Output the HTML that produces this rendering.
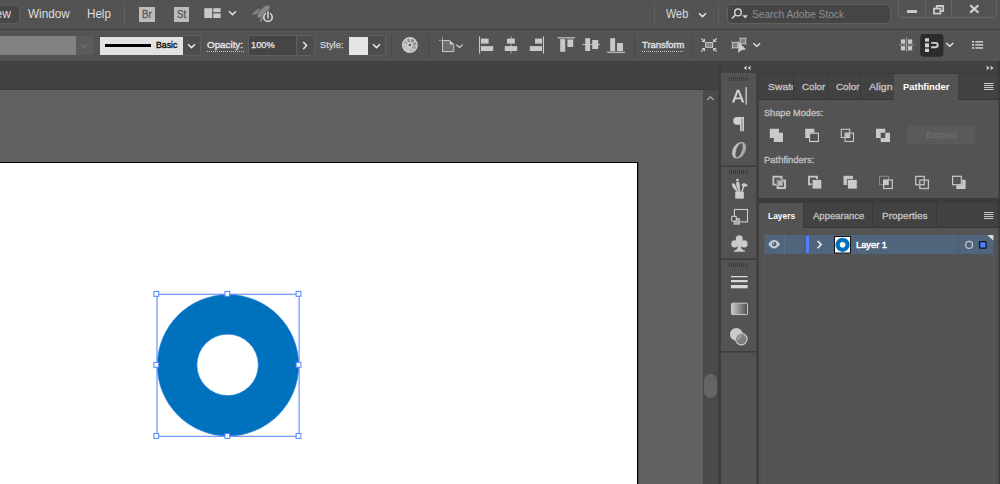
<!DOCTYPE html>
<html>
<head>
<meta charset="utf-8">
<title>Illustrator</title>
<style>
*{margin:0;padding:0;box-sizing:border-box;}
html,body{width:1000px;height:484px;overflow:hidden;background:#535353;}
body{position:relative;font-family:"Liberation Sans",sans-serif;color:#dcdcdc;font-size:12px;}
.a{position:absolute;}
.t{position:absolute;white-space:nowrap;line-height:1;transform-origin:0 0;}
svg{position:absolute;overflow:visible;}
/* ---- bars ---- */
#menubar{left:0;top:0;width:1000px;height:29px;background:#535353;}
#menuline{left:0;top:29px;width:1000px;height:1px;background:#3e3e3e;}
#ctrlbar{left:0;top:30px;width:1000px;height:31px;background:#535353;}
#tabbar{left:0;top:61px;width:719px;height:28px;background:#424242;}
#tabline{left:0;top:89px;width:719px;height:1px;background:#3a3a3a;}
#canvas{left:0;top:90px;width:703px;height:394px;background:#616161;}
#artboard{left:-2px;top:162px;width:640px;height:330px;background:#fff;border:1px solid #000;box-shadow:1px 0 0 rgba(0,0,0,.28);}
#vscroll{left:703px;top:90px;width:15px;height:394px;background:#4a4a4a;}
#vthumb{left:704px;top:374px;width:13px;height:24px;background:#656565;border-radius:7px;}
/* dock */
#dockhdr{left:719px;top:61px;width:281px;height:12px;background:#424242;}
#dockl{left:718px;top:61px;width:3px;height:423px;background:#3d3d3d;}
#iconcol{left:721px;top:73px;width:35px;height:411px;background:#535353;}
#dockm{left:756px;top:73px;width:3px;height:411px;background:#3f3f3f;}
.sep{left:721px;width:35px;height:2px;background:#3d3d3d;}
/* panels */
#pf-tabs{left:759px;top:73px;width:241px;height:27px;background:#424242;border-bottom:1px solid #383838;}
#pf-body{left:759px;top:100px;width:241px;height:98px;background:#535353;}
#pgap{left:759px;top:198px;width:241px;height:5px;background:#3b3b3b;}
#ly-tabs{left:759px;top:203px;width:241px;height:25px;background:#424242;border-bottom:1px solid #383838;}
#ly-body{left:759px;top:228px;width:241px;height:256px;background:#535353;}
.tabsep{width:1px;height:26px;background:#3a3a3a;}
.tabact{background:#535353;height:28px;}
.tb{font-size:9.2px;color:#c2c2c2;-webkit-text-stroke:0.3px #c2c2c2;}
</style>
</head>
<body>
<!-- background structure -->
<div class="a" id="menubar"></div>
<div class="a" id="menuline"></div>
<div class="a" id="ctrlbar"></div>
<div class="a" id="tabbar"></div>
<div class="a" id="tabline"></div>
<div class="a" id="canvas"></div>
<div class="a" id="artboard"></div>
<div class="a" id="vscroll"></div>
<div class="a" id="vthumb"></div>
<div class="a" id="dockhdr"></div>
<div class="a" id="iconcol"></div>
<div class="a" id="dockl"></div>
<div class="a" id="dockm"></div>
<div class="a" id="pf-tabs"></div>
<div class="a" id="pf-body"></div>
<div class="a" id="pgap"></div>
<div class="a" id="ly-tabs"></div>
<div class="a" id="ly-body"></div>
<div class="a" style="left:759px;top:73px;width:241px;height:1px;background:#393939;"></div>
<div class="a" style="left:999px;top:61px;width:1px;height:423px;background:#393939;z-index:5;"></div>
<div class="a" style="left:998px;top:61px;width:1px;height:423px;background:rgba(0,0,0,.13);z-index:5;"></div>
<!--MENUBAR-->
<div class="a" style="left:-6px;top:5px;width:26px;height:19px;background:#474747;border:1px solid #5c5c5c;border-radius:3px;"></div>
<div class="t" id="t-ew" style="left:-14.900px;top:8.20px;font-size:12px;color:#dedede;">View</div>
<div class="t" id="t-window" style="transform:scaleX(0.977);left:28.0px;top:8.20px;font-size:12px;color:#dedede;">Window</div>
<div class="t" id="t-help" style="transform:scaleX(0.968);left:86.9px;top:8.20px;font-size:12px;color:#dedede;">Help</div>
<div class="a" style="left:124px;top:5px;width:1px;height:19px;background:#616161;"></div>
<!-- Br / St -->
<div class="a" style="left:139px;top:7px;width:15.500px;height:15px;background:#bcbcbc;"></div>
<div class="t" id="t-br" style="left:141.800px;top:9.100px;font-size:10.500px;color:#575757;-webkit-text-stroke:0.300px #575757;transform:scaleX(.92);">Br</div>
<div class="a" style="left:174px;top:7px;width:15px;height:15px;background:#bcbcbc;"></div>
<div class="t" id="t-st" style="left:176.600px;top:9.100px;font-size:10.500px;color:#575757;-webkit-text-stroke:0.300px #575757;transform:scaleX(.92);">St</div>
<!-- workspace layout icon -->
<svg style="left:204px;top:8px" width="18" height="11" viewBox="0 0 18 11"><g fill="#c9c9c9"><rect x="0.300" y="0.200" width="7.900" height="9.800"/><rect x="9.300" y="0.200" width="7.300" height="3.900"/><rect x="9.300" y="5.400" width="7.300" height="4.600"/></g></svg>
<svg style="left:228.200px;top:10px" width="9" height="6" viewBox="0 0 9 6"><path d="M1 1.2L4.5 4.6L8 1.2" fill="none" stroke="#e0e0e0" stroke-width="1.5"/></svg>
<!-- rocket / gpu icon -->
<svg style="left:245px;top:0px" width="40" height="29" viewBox="245 0 40 29">
  <g fill="#858585">
    <ellipse cx="263.5" cy="11.5" rx="8.2" ry="3.2" transform="rotate(-45 263.5 11.5)"/>
    <path d="M252.2 14.1L258.3 8.5L259.9 9.1L256.8 13.9L252.6 14.8z"/>
    <path d="M259.7 21.8L261 17.8L262.7 16.4L263.1 18.8L260.9 21.9z"/>
  </g>
  <circle cx="268" cy="17.2" r="5.4" fill="#535353"/>
  <circle cx="268" cy="17.2" r="4.2" fill="none" stroke="#d6d6d6" stroke-width="1.7"/>
  <rect x="266" y="10.8" width="3.8" height="5" fill="#535353"/>
  <rect x="267.1" y="11.4" width="1.6" height="7" fill="#d6d6d6"/>
</svg>
<!-- right side -->
<div class="a" style="left:654px;top:5px;width:1px;height:19px;background:#616161;"></div>
<div class="t" id="t-web" style="transform:scaleX(0.907);left:666.4px;top:7.5px;font-size:12px;color:#dedede;">Web</div>
<svg style="left:698px;top:12px" width="9" height="6" viewBox="0 0 9 6"><path d="M1 1.2L4.5 4.6L8 1.2" fill="none" stroke="#e0e0e0" stroke-width="1.5"/></svg>
<div class="a" style="left:718px;top:5px;width:1px;height:19px;background:#616161;"></div>
<div class="a" style="left:727px;top:4px;width:164px;height:20px;background:#454545;border:1px solid #606060;border-radius:4px;"></div>
<svg style="left:731px;top:7px" width="18" height="14" viewBox="0 0 18 14">
  <circle cx="7" cy="5.400" r="3.300" fill="none" stroke="#d0d0d0" stroke-width="1.500"/>
  <path d="M4.700 7.800L0.800 11.500" stroke="#d0d0d0" stroke-width="1.600" fill="none"/>
  <path d="M11.200 8.300h5.700l-2.850 3.100z" fill="#d0d0d0"/>
</svg>
<div class="t" id="t-search" style="transform:scaleX(0.923);left:752.0px;top:8.5px;font-size:11px;color:#8f8f8f;">Search Adobe Stock</div>
<!-- window buttons -->
<div class="a" style="left:898px;top:-4px;width:99px;height:22px;border:1px solid #656565;border-radius:4px;"></div>
<div class="a" style="left:925px;top:0;width:1px;height:17px;background:#656565;"></div>
<div class="a" style="left:951px;top:0;width:1px;height:17px;background:#656565;"></div>
<div class="a" style="left:907px;top:10.200px;width:9.700px;height:3.200px;background:#c9c9c9;"></div>
<svg style="left:933px;top:5px" width="12" height="10" viewBox="0 0 12 10"><g fill="none" stroke="#c9c9c9" stroke-width="1.800"><path d="M3.700 3.200V1H10.200V6H8"/><rect x="1" y="3.600" width="6.400" height="5"/></g></svg>
<svg style="left:969px;top:4px" width="11" height="10" viewBox="0 0 11 10"><path d="M1.200 1.200L9.400 8.600M9.400 1.200L1.200 8.600" stroke="#cdcdcd" stroke-width="2.200" fill="none"/></svg>
<!--CTRLBAR-->
<div class="a" style="left:-4px;top:36px;width:80px;height:19px;background:#828282;"></div>
<div class="a" style="left:76px;top:36px;width:18px;height:19px;background:#5b5b5b;border-radius:0 3px 3px 0;"></div>
<svg style="left:80px;top:43px" width="9" height="6" viewBox="0 0 9 6"><path d="M1 1.2L4.5 4.6L8 1.2" fill="none" stroke="#6e6e6e" stroke-width="1.4"/></svg>
<!-- stroke -->
<div class="a" style="left:99.5px;top:36.6px;width:83px;height:18px;background:#e2e2e2;"></div>
<div class="a" style="left:105px;top:44.4px;width:46.4px;height:2.5px;background:#000;"></div>
<div class="t" id="t-basic" style="transform:scaleX(0.933);left:155.9px;top:40.1px;font-size:9.4px;color:#000;-webkit-text-stroke:0.3px #000;">Basic</div>
<div class="a" style="left:183px;top:35px;width:18px;height:21px;background:#4d4d4d;border:1px solid #5e5e5e;border-left:none;border-radius:0 3px 3px 0;"></div>
<svg style="left:187px;top:43px" width="9" height="6" viewBox="0 0 9 6"><path d="M1 1.2L4.5 4.6L8 1.2" fill="none" stroke="#e6e6e6" stroke-width="1.5"/></svg>
<!-- opacity -->
<div class="t" id="t-opacity" style="transform:scaleX(1.047);left:207.0px;top:40.1px;font-size:9.4px;color:#e4e4e4;-webkit-text-stroke:0.35px #e4e4e4;">Opacity:</div>
<div class="a" style="left:207px;top:51px;width:37px;height:1px;background:repeating-linear-gradient(90deg,#c4c4c4 0 1px,transparent 1px 2px);"></div>
<div class="a" style="left:248px;top:35px;width:67px;height:21px;background:#454545;border:1px solid #5e5e5e;border-radius:3px;"></div>
<div class="a" style="left:296px;top:36px;width:1px;height:19px;background:#5e5e5e;"></div>
<div class="a" style="left:297px;top:36px;width:17px;height:19px;background:#4d4d4d;border-radius:0 2px 2px 0;"></div>
<div class="t" id="t-100" style="transform:scaleX(0.992);left:251.2px;top:40.1px;font-size:9.4px;color:#ececec;-webkit-text-stroke:0.25px #ececec;">100%</div>
<svg style="left:302px;top:41px" width="6" height="9" viewBox="0 0 6 9"><path d="M1.2 1L4.6 4.5L1.2 8" fill="none" stroke="#e6e6e6" stroke-width="1.5"/></svg>
<!-- style -->
<div class="t" id="t-style" style="transform:scaleX(1.002);left:319.5px;top:40.1px;font-size:9.4px;color:#d4d4d4;-webkit-text-stroke:0.25px #d4d4d4;">Style:</div>
<div class="a" style="left:349.200px;top:36.500px;width:18.600px;height:18.300px;background:#e5e5e5;"></div>
<div class="a" style="left:368px;top:35px;width:18px;height:21px;background:#4d4d4d;border:1px solid #5e5e5e;border-left:none;border-radius:0 3px 3px 0;"></div>
<svg style="left:372px;top:43px" width="9" height="6" viewBox="0 0 9 6"><path d="M1 1.2L4.5 4.6L8 1.2" fill="none" stroke="#e6e6e6" stroke-width="1.5"/></svg>
<div class="a" style="left:391px;top:34px;width:1px;height:23px;background:#484848;"></div>
<!-- recolor wheel -->
<svg style="left:395px;top:32px" width="75" height="28" viewBox="395 32 75 28">
  <circle cx="409.85" cy="45.10" r="8" fill="#d0d0d0"/>
  <path d="M410.60 42.30L411.58 38.63A6.7 6.7 0 0 1 414.67 40.45L411.94 43.09A2.9 2.9 0 0 0 410.60 42.30z" fill="#868686"/>
  <path d="M412.36 43.65L415.65 41.75A6.7 6.7 0 0 1 416.55 45.22L412.75 45.15A2.9 2.9 0 0 0 412.36 43.65z" fill="#8e8e8e"/>
  <path d="M412.65 45.85L416.32 46.83A6.7 6.7 0 0 1 414.50 49.92L411.86 47.19A2.9 2.9 0 0 0 412.65 45.85z" fill="#9c9c9c"/>
  <path d="M411.30 47.61L413.20 50.90A6.7 6.7 0 0 1 409.73 51.80L409.80 48.00A2.9 2.9 0 0 0 411.30 47.61z" fill="#b2b2b2"/>
  <path d="M409.10 47.90L408.12 51.57A6.7 6.7 0 0 1 405.03 49.75L407.76 47.11A2.9 2.9 0 0 0 409.10 47.90z" fill="#c2c2c2"/>
  <path d="M407.34 46.55L404.05 48.45A6.7 6.7 0 0 1 403.15 44.98L406.95 45.05A2.9 2.9 0 0 0 407.34 46.55z" fill="#bcbcbc"/>
  <path d="M407.05 44.35L403.38 43.37A6.7 6.7 0 0 1 405.20 40.28L407.84 43.01A2.9 2.9 0 0 0 407.05 44.35z" fill="#a6a6a6"/>
  <path d="M408.40 42.59L406.50 39.30A6.7 6.7 0 0 1 409.97 38.40L409.90 42.20A2.9 2.9 0 0 0 408.40 42.59z" fill="#909090"/>
  <circle cx="409.85" cy="45.10" r="1.1" fill="#3c3c3c"/>
</svg>
<div class="a" style="left:428px;top:34px;width:1px;height:23px;background:#474747;"></div>
<!-- doc setup icon -->
<svg style="left:435px;top:32px" width="35" height="28" viewBox="435 32 35 28">
  <path d="M442.500 37v3.600M439.200 40.500h3.800" stroke="#bdbdbd" stroke-width="0.9" fill="none" stroke-dasharray="1.2 0.9"/>
  <path d="M442.500 40.600h7.300l4 4v7h-11.300z" fill="#6e6e6e" stroke="#cbcbcb" stroke-width="1"/>
  <path d="M449.800 40.400v4.200h4.200z" fill="#d2d2d2"/>
  <path d="M456.300 44.600L459.500 47.500L462.700 44.600" fill="none" stroke="#d8d8d8" stroke-width="1.2"/>
</svg>
<!-- align icons -->
<svg style="left:470px;top:30px" width="170" height="31" viewBox="470 30 170 31"><g fill="#c8c8c8">
  <rect x="479" y="36.400" width="1.100" height="17.200"/><rect x="481" y="38.600" width="7.600" height="5"/><rect x="481" y="46.100" width="12.200" height="4.900"/>
  <rect x="510.450" y="36.400" width="1.100" height="17.200" fill="#a2a2a2"/><rect x="507" y="38.600" width="7.900" height="5"/><rect x="504.800" y="46.100" width="12.400" height="4.900"/>
  <rect x="542.900" y="36.400" width="1.100" height="17.200"/><rect x="535" y="38.600" width="7" height="5"/><rect x="529.800" y="46.100" width="12.200" height="4.900"/>
  <rect x="557.600" y="37.100" width="17.400" height="1.400" fill="#b4b4b4"/><rect x="560.200" y="39.100" width="5" height="12.700"/><rect x="567.400" y="39.500" width="5.800" height="7.500"/>
  <rect x="582.400" y="43.900" width="17.600" height="1.200" fill="#b4b4b4"/><rect x="585.200" y="38.200" width="4.900" height="12.800"/><rect x="592.200" y="40" width="6" height="9"/>
  <rect x="607.200" y="51.700" width="17.800" height="1.400" fill="#b4b4b4"/><rect x="610.200" y="38.200" width="4.900" height="13"/><rect x="617" y="43" width="6" height="8.200"/>
</g></svg>
<div class="a" style="left:634px;top:34px;width:1px;height:23px;background:#484848;"></div>
<div class="t" id="t-transform" style="transform:scaleX(1.001);left:642.0px;top:40.1px;font-size:9.4px;color:#e4e4e4;-webkit-text-stroke:0.35px #e4e4e4;">Transform</div>
<div class="a" style="left:642px;top:51px;width:42px;height:1px;background:repeating-linear-gradient(90deg,#c4c4c4 0 1px,transparent 1px 2px);"></div>
<div class="a" style="left:691px;top:34px;width:1px;height:23px;background:#484848;"></div>
<!-- isolate icon -->
<svg style="left:695px;top:32px" width="75" height="28" viewBox="695 32 75 28">
  <rect x="705.600" y="42.600" width="7" height="4.700" fill="#858585" stroke="#cdcdcd" stroke-width="1"/>
  <g fill="none" stroke="#cdcdcd" stroke-width="1.150">
    <path d="M701.300 38.300L704.400 41.400M701.900 41.500H704.500V38.900"/>
    <path d="M716.900 38.300L713.800 41.400M716.300 41.500H713.700V38.900"/>
    <path d="M701.300 51.700L704.400 48.600M701.900 48.500H704.500V51.100"/>
    <path d="M716.900 51.700L713.800 48.600M716.300 48.500H713.700V51.100"/>
  </g>
<!-- select similar icon -->
  <g fill="#7e7e7e" stroke="#c2c2c2" stroke-width="1">
    <rect x="740.300" y="38.300" width="5.400" height="5.400"/><rect x="732.400" y="42.400" width="5.400" height="5.400"/>
  </g>
  <g stroke="#b4b4b4" stroke-width="0.900" fill="none">
    <path d="M739.300 37.300l1 1M746.700 37.300l-1 1M746.700 44.700l-1 -1M739.300 44.700l1 -1"/>
    <path d="M731.400 41.400l1 1M731.400 48.800l1 -1M738.800 41.400l-1 1"/>
  </g>
  <path d="M738.200 41.200V53L741.300 50.300L746 49.400z" fill="#cbcbcb"/>
  <path d="M753.300 43.200L756.700 46.300L760.100 43.200" fill="none" stroke="#e2e2e2" stroke-width="1.400"/>
</svg>
<!-- right icons -->
<svg style="left:895px;top:32px" width="105" height="28" viewBox="895 32 105 28">
  <g fill="#c9c9c9"><rect x="900.900" y="39.400" width="4.300" height="4.300"/><rect x="907.900" y="39.400" width="4.300" height="4.300"/><rect x="900.900" y="46.100" width="4.300" height="4.300"/><rect x="907.900" y="46.100" width="4.300" height="4.300"/></g>
  <path d="M906.550 37.200v14.800M899 44.900h15" stroke="#9a9a9a" stroke-width="0.900" fill="none"/>
  <rect x="920.200" y="33.900" width="23.200" height="22.800" rx="3" fill="#2c2c2c"/>
  <g fill="#d2d2d2"><rect x="925" y="38.300" width="4" height="3.300"/><rect x="925" y="43.300" width="4" height="4"/><rect x="925" y="48.700" width="4" height="3.300"/></g>
  <path d="M931.200 42.900h4.300a2.200 2.200 0 0 1 0 4.400h-4.300" fill="none" stroke="#d2d2d2" stroke-width="1.900"/>
  <path d="M946.300 43L949.750 46.200L953.200 43" fill="none" stroke="#e6e6e6" stroke-width="1.500"/>
  <g fill="#cfcfcf"><rect x="972" y="41" width="2.100" height="1.700"/><rect x="972" y="44" width="2.100" height="1.700"/><rect x="972" y="47.100" width="2.100" height="1.700"/>
  <rect x="975.300" y="41.100" width="7.800" height="1.500"/><rect x="975.300" y="44.100" width="7.800" height="1.500"/><rect x="975.300" y="47.200" width="7.800" height="1.500"/></g>
</svg>
<!--CANVAS-->
<svg id="ring" style="left:0;top:90px" width="703" height="394" viewBox="0 90 703 394">
  <path fill="#0071bd" stroke="#2f7fe0" stroke-width="0.600" fill-rule="evenodd" d="M228 294.600a70.700 70.700 0 1 0 0 141.400a70.700 70.700 0 1 0 0-141.400zM227.600 334.200a30.700 30.700 0 1 1 0 61.400a30.700 30.700 0 1 1 0-61.400z"/>
  <rect x="157" y="294.250" width="142.100" height="142.050" fill="none" stroke="#4f80ff" stroke-width="1"/>
  <g fill="#fff" stroke="#4f80ff" stroke-width="1">
    <rect x="153.90" y="291.40" width="4.800" height="4.900"/>
    <rect x="224.90" y="291.40" width="4.800" height="4.900"/>
    <rect x="296.10" y="291.40" width="4.800" height="4.900"/>
    <rect x="153.90" y="362.35" width="4.800" height="4.900"/>
    <rect x="296.10" y="362.35" width="4.800" height="4.900"/>
    <rect x="153.90" y="433.45" width="4.800" height="4.900"/>
    <rect x="224.90" y="433.45" width="4.800" height="4.900"/>
    <rect x="296.10" y="433.45" width="4.800" height="4.900"/>
  </g>
</svg>
<!-- scrollbar arrow -->
<svg style="left:706px;top:95px" width="10" height="7" viewBox="0 0 10 7"><path d="M1.200 5L4.450 1.800L7.700 5" fill="none" stroke="#9c9c9c" stroke-width="1.600"/></svg>
<!--DOCK-->
<svg style="left:719px;top:61px" width="281" height="423" viewBox="719 61 281 423">
  <!-- collapse arrows -->
  <g fill="#dadada">
    <path d="M747.100 65.500L743.600 67.900L747.100 70.300L746.100 67.900zM751.100 65.500L747.600 67.900L751.100 70.300L750.100 67.900z"/>
    <path d="M986.100 65.500L989.600 67.900L986.100 70.300L987.100 67.900zM990.100 65.500L993.600 67.900L990.100 70.300L991.100 67.900z"/>
  </g>
  <!-- grips -->
  <g stroke="#3c3c3c" stroke-width="1">
    <path d="M729.500 77v4M731.500 77v4M733.500 77v4M735.500 77v4M737.500 77v4M739.500 77v4M741.500 77v4M743.500 77v4M745.500 77v4M747.500 77v4"/>
    <path d="M729.500 170v4M731.500 170v4M733.500 170v4M735.500 170v4M737.500 170v4M739.500 170v4M741.500 170v4M743.500 170v4M745.500 170v4M747.500 170v4"/>
    <path d="M729.500 263v4M731.500 263v4M733.500 263v4M735.500 263v4M737.500 263v4M739.500 263v4M741.500 263v4M743.500 263v4M745.500 263v4M747.500 263v4"/>
  </g>
  <!-- separators -->
  <g fill="#3d3d3d"><rect x="721" y="165.500" width="35" height="1.500"/><rect x="721" y="258.500" width="35" height="1.500"/><rect x="721" y="351" width="35" height="1.500"/></g>
  <!-- A| character icon -->
  <path fill-rule="evenodd" d="M731.900 102.400L736.900 89.700H739.300L744.300 102.400H741.900L740.750 99.300H735.450L734.300 102.400zM736.150 97.400H740.050L738.100 92z" fill="#d0d0d0"/>
  <rect x="745.500" y="87.200" width="1.300" height="17.400" fill="#cfcfcf"/>
  <!-- pilcrow -->
  <path d="M737 117.100H744V131.300H742.400V118.500H741.700V131.300H740.100V124.700H737A3.800 3.800 0 0 1 737 117.100z" fill="#cfcfcf"/>
  <!-- stroke icon -->
  <g fill="#d6d6d6"><rect x="731" y="276" width="16.600" height="1.300"/><rect x="731" y="280" width="16.600" height="2.200"/><rect x="731" y="285" width="16.600" height="3.300"/></g>
  <!-- gradient icon -->
  <defs><linearGradient id="gr" x1="0" x2="1" y1="0" y2="0"><stop offset="0" stop-color="#cacaca"/><stop offset="1" stop-color="#4e4e4e"/></linearGradient></defs>
  <rect x="731.500" y="303.200" width="16" height="11.400" rx="0.800" fill="url(#gr)" stroke="#c9c9c9" stroke-width="1"/>
  <!-- transparency icon -->
  <circle cx="736.300" cy="334.300" r="6.300" fill="#cbcbcb"/>
  <circle cx="741.300" cy="339.100" r="5.800" fill="#7e7e7e" stroke="#cdcdcd" stroke-width="1.100"/>
  <path d="M736.400 340.600A5.800 5.800 0 0 1 742.300 333.500A6.300 6.300 0 0 1 736.400 340.600z" fill="#969696"/>
  <!-- symbols icon -->
  <rect x="734.400" y="209.500" width="13.100" height="12.400" fill="none" stroke="#cdcdcd" stroke-width="1.100"/>
  <rect x="734.200" y="218.600" width="5" height="5.500" fill="#a2a2a2" stroke="#cdcdcd" stroke-width="1"/>
  <rect x="731.800" y="216.400" width="4.400" height="4.600" fill="#535353" stroke="#cdcdcd" stroke-width="1"/>
  <rect x="733" y="217.600" width="2" height="2.200" fill="#404040"/>
  <!-- club -->
  <g fill="#cbcbcb">
    <circle cx="739.300" cy="238.700" r="3.500"/><circle cx="734.800" cy="243.900" r="3.550"/><circle cx="744.100" cy="243.900" r="3.550"/>
    <path d="M738.300 241H740.500C740.500 247.300 741.200 249.900 744.900 250.500V251.700H734V250.500C737.700 249.900 738.300 247.300 738.300 241z"/>
    <path d="M736.500 241.500H742.300V245.500H736.500z"/>
  </g>
  <!-- brushes -->
  <g fill="#cdcdcd">
    <rect x="735.200" y="191.800" width="8.600" height="6.800"/>
    <path d="M736.800 192L733.300 187.900C731.500 185.600 731.800 183.600 732.800 183.100C734.300 183.500 735.600 185.200 736.200 187L738.200 192z"/>
    <circle cx="737.400" cy="180" r="1.350"/>
    <path d="M736.300 182.300C735.900 184.500 736.500 186.600 737.400 188L738.500 192H740.400L739.700 187.600C740.100 185.500 739.700 183 738.600 181.400z"/>
    <path d="M741.500 185C742.500 182.700 746.300 182.300 748.100 186.500C746.600 185.900 745 186.300 744 187.300L742.700 192H741.100L742.700 186.500z"/>
  </g>
</svg>
<!-- italic O glyph -->
<svg style="left:721px;top:136px" width="35" height="28" viewBox="721 136 35 28">
  <defs><linearGradient id="og" x1="0" x2="1" y1="0" y2="0"><stop offset="0" stop-color="#c6c6c6"/><stop offset="1" stop-color="#a2a2a2"/></linearGradient></defs>
  <g transform="translate(739.100 150.300)">
    <path fill="url(#og)" fill-rule="evenodd" transform="skewX(-16)" d="M-6.700 0a6.700 8.300 0 1 0 13.400 0a6.700 8.300 0 1 0 -13.400 0zM-3 0a3 7.100 0 1 1 6 0a3 7.100 0 1 1 -6 0z"/>
  </g>
</svg>
<!--PATHFINDER-->
<div class="a tabsep" style="left:793px;top:73px;"></div>
<div class="a tabsep" style="left:826.500px;top:73px;"></div>
<div class="a tabsep" style="left:860px;top:73px;"></div>
<div class="a tabact" style="left:894px;top:74px;width:64px;height:27px;"></div>
<div class="a tabsep" style="left:958px;top:73px;"></div>
<div class="a" style="left:767px;top:80px;width:26px;height:14px;overflow:hidden;"><div class="t tb" id="t-swatc" style="transform:scaleX(1.130);left:0.8px;top:3.31px;">Swatches</div></div>
<div class="t tb" id="t-color1" style="transform:scaleX(1.056);left:801.6px;top:83.31px;">Color</div>
<div class="t tb" id="t-color2" style="transform:scaleX(1.070);left:835.5px;top:83.31px;">Color</div>
<div class="t tb" id="t-align" style="transform:scaleX(1.155);left:869.0px;top:83.31px;">Align</div>
<div class="t tb" id="t-pathfinder" style="transform:scaleX(1.023);left:902.5px;top:83.31px;color:#fff;font-weight:bold;-webkit-text-stroke:0;">Pathfinder</div>
<svg style="left:983px;top:82px" width="11" height="10" viewBox="0 0 11 10"><g fill="#c8c8c8"><rect x="1" y="1" width="9.500" height="1"/><rect x="1" y="3" width="9.500" height="1"/><rect x="1" y="5" width="9.500" height="1"/><rect x="1" y="7" width="9.500" height="1"/></g></svg>
<div class="t tb" id="t-shapemodes" style="transform:scaleX(0.999);left:764.0px;top:108.91px;">Shape Modes:</div>
<div class="t tb" id="t-pathfinders" style="transform:scaleX(1.026);left:764.0px;top:155.91px;">Pathfinders:</div>
<div class="a" style="left:907px;top:126px;width:68px;height:18px;background:#5a5a5a;border-radius:2px;"></div>
<div class="t" id="t-expand" style="transform:scaleX(0.983);font-size:9.300px;left:925.7px;top:131.300px;color:#727272;">Expand</div>
<!-- pathfinder icons -->
<svg style="left:759px;top:120px" width="241" height="75" viewBox="759 120 241 75">
  <!-- unite -->
  <path d="M769.800 128.800h9.200v4h4v9.200h-9.200v-4h-4z" fill="#c9c9c9"/>
  <!-- minus front -->
  <path d="M805.200 128.800h9.200v4h-5.200v5.200h-4z" fill="#c9c9c9"/>
  <rect x="809.600" y="133.200" width="8.800" height="8.300" fill="none" stroke="#d0d0d0" stroke-width="1.100"/>
  <!-- intersect -->
  <g fill="none" stroke="#c6c6c6" stroke-width="1.100">
    <rect x="841.300" y="129.300" width="8.400" height="8.200"/><rect x="845" y="133" width="8.500" height="8.500"/>
  </g>
  <rect x="845.500" y="133.500" width="3.700" height="3.500" fill="#c9c9c9"/>
  <!-- exclude -->
  <path fill="#c9c9c9" fill-rule="evenodd" d="M876 128.800h9.300v4h4.700v9.200h-9.300v-4h-4.700zM880.700 132.800v5.200h4.600v-5.200z"/>
  <!-- row 2 : divide -->
  <rect x="773.400" y="176.700" width="8.200" height="7.900" fill="none" stroke="#c4c4c4" stroke-width="1.800"/>
  <rect x="777.600" y="180.600" width="7.400" height="7.400" fill="none" stroke="#c4c4c4" stroke-width="2.100"/>
  <rect x="777" y="180" width="5.500" height="5.500" fill="#b6b6b6"/>
  <path d="M777 185.500V180H782.500" fill="none" stroke="#5e5e5e" stroke-width="0.900"/>
  <!-- trim -->
  <rect x="809" y="176.700" width="8" height="7.600" fill="none" stroke="#c4c4c4" stroke-width="1.900"/>
  <rect x="812.100" y="179.600" width="9.700" height="9.400" fill="#c9c9c9" stroke="#535353" stroke-width="0.800"/>
  <!-- merge -->
  <rect x="843.500" y="175.800" width="9.500" height="9.200" fill="#c4c4c4"/>
  <rect x="847.400" y="179.500" width="9.800" height="9.500" fill="#cbcbcb" stroke="#535353" stroke-width="0.800"/>
  <!-- crop -->
  <rect x="879.500" y="176.300" width="9" height="8.400" fill="none" stroke="#8a8a8a" stroke-width="1"/>
  <rect x="883.600" y="180" width="8.700" height="8.500" fill="none" stroke="#c9c9c9" stroke-width="1.200"/>
  <rect x="883.600" y="180" width="5" height="5.100" fill="#c9c9c9"/>
  <!-- outline -->
  <g fill="none" stroke="#c2c2c2" stroke-width="1.300">
    <rect x="915.700" y="176.400" width="8.600" height="8.300"/><rect x="919.800" y="180.100" width="8.600" height="8.400"/>
  </g>
  <!-- minus back -->
  <rect x="952.600" y="176.300" width="8.700" height="8.400" fill="none" stroke="#c9c9c9" stroke-width="1.200"/>
  <path d="M962.200 179.700h3.400v9.300h-9.300v-3.700h5.900z" fill="#c9c9c9"/>
</svg>
<!--LAYERS-->
<div class="a tabact" style="left:759px;top:203px;width:44px;height:26px;"></div>
<div class="a tabsep" style="left:803px;top:203px;height:24px;"></div>
<div class="a tabsep" style="left:872px;top:203px;height:24px;"></div>
<div class="a tabsep" style="left:936px;top:203px;height:24px;"></div>
<div class="t tb" id="t-layers" style="transform:scaleX(0.921);left:767.7px;top:212.21px;color:#fff;font-weight:bold;-webkit-text-stroke:0;">Layers</div>
<div class="t tb" id="t-appearance" style="transform:scaleX(1.037);left:812.6px;top:212.21px;">Appearance</div>
<div class="t tb" id="t-properties" style="transform:scaleX(1.087);left:882.0px;top:212.21px;">Properties</div>
<svg style="left:983px;top:211px" width="11" height="10" viewBox="0 0 11 10"><g fill="#c8c8c8"><rect x="1" y="1" width="9.500" height="1"/><rect x="1" y="3" width="9.500" height="1"/><rect x="1" y="5" width="9.500" height="1"/><rect x="1" y="7" width="9.500" height="1"/></g></svg>
<!-- list box -->
<div class="a" style="left:764px;top:234px;width:230px;height:260px;border:1px solid #5b5b5b;border-top:none;"></div>
<div class="a" style="left:765px;top:234.600px;width:228.400px;height:19.400px;background:#50657b;"></div>
<div class="a" style="left:784px;top:234.600px;width:1px;height:19.400px;background:#5b7086;"></div>
<div class="a" style="left:804px;top:234.600px;width:1px;height:19.400px;background:#485b6f;"></div>
<div class="a" style="left:958px;top:234.600px;width:1px;height:19.400px;background:#485b6f;"></div>
<div class="a" style="left:806px;top:236px;width:3px;height:17px;background:#4f80ff;"></div>
<svg style="left:764px;top:234px" width="230" height="21" viewBox="764 234 230 21">
  <!-- eye -->
  <path d="M768.300 244.200C770.400 240.800 772.600 239.900 774.200 239.900C775.800 239.900 778 240.800 780.100 244.200C778 247.500 775.800 248.400 774.200 248.400C772.600 248.400 770.400 247.500 768.300 244.200z" fill="#c9cfd6"/>
  <circle cx="774.200" cy="244.100" r="2.400" fill="#50657b"/>
  <circle cx="773.500" cy="243.400" r="0.800" fill="#c9cfd6"/>
  <!-- chevron -->
  <path d="M817.600 241L821.200 244.600L817.600 248.200" fill="none" stroke="#f0f0f0" stroke-width="1.500"/>
  <!-- thumbnail -->
  <rect x="834.500" y="236.500" width="16" height="16.500" fill="#fff" stroke="#111" stroke-width="1"/>
  <circle cx="842.600" cy="244.800" r="4.950" fill="none" stroke="#0071bd" stroke-width="4.300"/>
  <!-- target circle -->
  <circle cx="969.100" cy="244.900" r="3.450" fill="none" stroke="#bcc3cb" stroke-width="1.300"/>
  <!-- selection square -->
  <rect x="979.600" y="241.600" width="6.500" height="6.500" rx="0.700" fill="#4f80ff" stroke="#0e1218" stroke-width="1.300"/>
  <!-- corner -->
  <path d="M987.300 235H993.400V240.800z" fill="#dedede"/>
</svg>
<div class="t tb" id="t-layer1" style="transform:scaleX(1.011);-webkit-text-stroke:0.450px #fff;left:856.0px;top:241.21px;color:#fff;">Layer 1</div>
</body>
</html>
